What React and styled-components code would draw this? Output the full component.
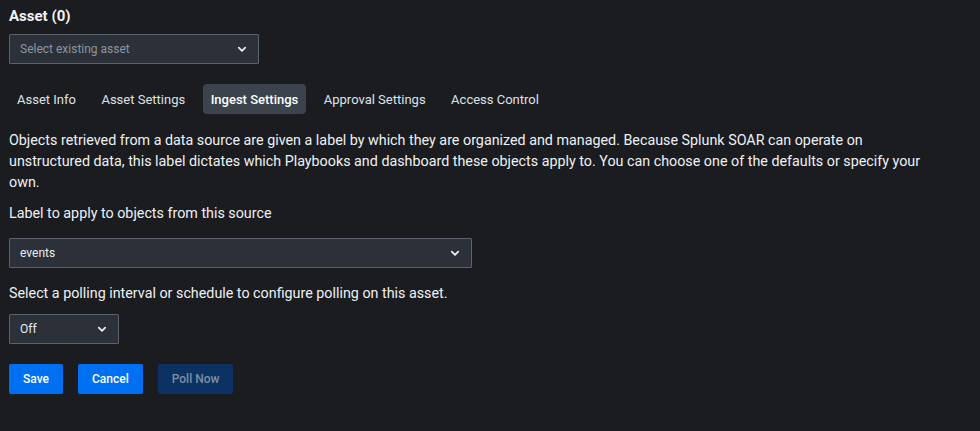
import React from "react";
import styled, { createGlobalStyle } from "styled-components";

const Global = createGlobalStyle`
  html, body { margin: 0; padding: 0; background: #1a1c20; }
  body { font-family: Roboto, "Noto Sans", sans-serif; color: #e8ecf0; }
  * { box-sizing: border-box; }
`;

const Page = styled.div`
  width: 980px;
  height: 431px;
  padding: 7px 9px 0 9px;
  background: #1a1c20;
  display: flex;
  flex-direction: column;
`;

const Title = styled.h2`
  margin: 0;
  font-size: 15px;
  font-weight: 700;
  line-height: 19px;
  color: #f2f4f6;
`;

const SelectBox = styled.div`
  width: ${(p) => p.$w}px;
  height: 30px;
  margin-top: ${(p) => p.$mt || 0}px;
  display: flex;
  align-items: center;
  justify-content: space-between;
  padding: 0 11px 0 10px;
  background: #2b3039;
  border: 1px solid #5b626d;
  border-radius: 1px;
  font-size: 12px;
  color: ${(p) => (p.$placeholder ? "#8b96a3" : "#e8ecf0")};
`;

const Chevron = () => (
  <svg width="10" height="7" viewBox="0 0 10 7" fill="none">
    <path d="M1.8 1.6 L5 4.8 L8.2 1.6" stroke="#e8ecf0" strokeWidth="1.8" strokeLinecap="round" strokeLinejoin="round" />
  </svg>
);

const Tabs = styled.div`
  display: flex;
  gap: 9.5px;
  margin-top: 20px;
`;

const Tab = styled.div`
  height: 30px;
  padding: 0 8px;
  display: flex;
  align-items: center;
  border-radius: 4px;
  font-size: 13px;
  font-weight: ${(p) => (p.$active ? 500 : 400)};
  background: ${(p) => (p.$active ? "#3c434c" : "transparent")};
  color: ${(p) => (p.$active ? "#ffffff" : "#dde2e8")};
`;

const Paragraph = styled.p`
  margin: 16px 0 0 0;
  width: 925px;
  font-size: 14.3px;
  line-height: 21px;
  color: #eef1f4;
`;

const Label = styled.div`
  margin-top: ${(p) => p.$mt}px;
  font-size: 14.3px;
  line-height: 21px;
  color: #eef1f4;
`;

const Buttons = styled.div`
  display: flex;
  gap: 15px;
  margin-top: 20px;
`;

const Button = styled.button`
  height: 30px;
  padding: 0 14px;
  border: none;
  border-radius: 2px;
  font-family: Roboto, sans-serif;
  font-size: 12px;
  font-weight: 500;
  background: ${(p) => (p.$disabled ? "#0b3262" : "#0070f2")};
  color: ${(p) => (p.$disabled ? "#7b8ea5" : "#ffffff")};
`;

export default function App() {
  return (
    <>
      <Global />
      <Page>
        <Title>Asset (0)</Title>
        <SelectBox $w={250} $mt={8} $placeholder>
          <span>Select existing asset</span>
          <Chevron />
        </SelectBox>
        <Tabs>
          <Tab>Asset Info</Tab>
          <Tab>Asset Settings</Tab>
          <Tab $active>Ingest Settings</Tab>
          <Tab>Approval Settings</Tab>
          <Tab>Access Control</Tab>
        </Tabs>
        <Paragraph>
          Objects retrieved from a data source are given a label by which they are organized and managed. Because Splunk SOAR can operate on unstructured data, this label dictates which Playbooks and dashboard these objects apply to. You can choose one of the defaults or specify your own.
        </Paragraph>
        <Label $mt={10}>Label to apply to objects from this source</Label>
        <SelectBox $w={463} $mt={14}>
          <span>events</span>
          <Chevron />
        </SelectBox>
        <Label $mt={15}>Select a polling interval or schedule to configure polling on this asset.</Label>
        <SelectBox $w={110} $mt={10}>
          <span>Off</span>
          <Chevron />
        </SelectBox>
        <Buttons>
          <Button>Save</Button>
          <Button>Cancel</Button>
          <Button $disabled>Poll Now</Button>
        </Buttons>
      </Page>
    </>
  );
}
